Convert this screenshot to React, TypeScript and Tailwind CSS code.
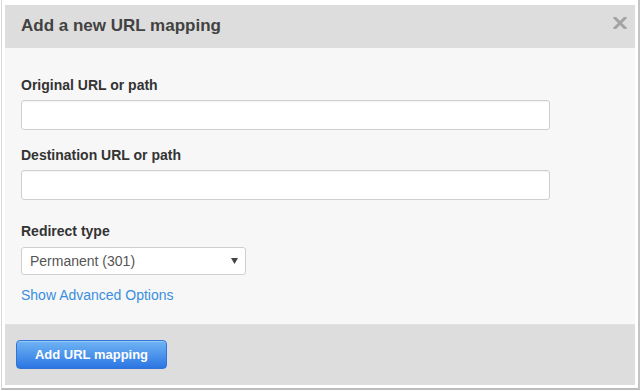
import { useState } from "react";

function CloseIcon() {
  return (
    <svg width="14" height="12" viewBox="0 0 14 12" className="block">
      <path d="M2 1 L12 11 M12 1 L2 11" stroke="#a3a3a3" strokeWidth="3" strokeLinecap="square" />
    </svg>
  );
}

function Field({ label, className = "" }: { label: string; className?: string }) {
  return (
    <div className={className}>
      <label className="block text-[14px] font-bold leading-4 text-[#333]">{label}</label>
      <input
        type="text"
        className="mt-[7px] block h-[30px] w-[529px] rounded-[3px] border border-[#cfcfcf] bg-white px-2 text-[14px] outline-none shadow-[inset_0_1px_1px_rgba(0,0,0,0.05)]"
      />
    </div>
  );
}

export default function App() {
  const [type] = useState("Permanent (301)");

  return (
    <div className="h-[391px] w-[640px] bg-white font-['Liberation_Sans',Arial,sans-serif]">
      <div className="ml-[1px] box-border flex h-[390px] w-[639px] flex-col border-b-2 border-l border-r-2 border-b-[#bdbdbd] border-l-[#d6d6d6] border-r-[#c4c4c4] bg-white pb-[3px] pl-[3px] pr-[3px] pt-[5px]">
        {/* header */}
        <div className="flex h-[43px] shrink-0 items-start justify-between bg-[#dddddd] pl-4 pr-[8px] pt-[11px]">
          <h2 className="text-[17px] font-bold leading-5 text-[#424242]">Add a new URL mapping</h2>
          <button className="mt-[1px]">
            <CloseIcon />
          </button>
        </div>

        {/* body */}
        <div className="flex h-[276px] shrink-0 flex-col bg-[#f7f7f7] pl-4 pt-[29px]">
          <Field label="Original URL or path" />
          <Field label="Destination URL or path" className="mt-[17px]" />

          <div className="mt-[23px]">
            <label className="block text-[14px] font-bold leading-4 text-[#333]">Redirect type</label>
            <div className="relative mt-[8px] flex h-[28px] w-[225px] items-center rounded-[3px] border border-[#cfcfcf] bg-white pl-[8px]">
              <span className="text-[14px] leading-4 text-[#555]">{type}</span>
              <svg width="7" height="6" viewBox="0 0 7 6" className="absolute right-[7px] top-[10px]">
                <path d="M0 0 H7 L3.5 6 Z" fill="#444" />
              </svg>
            </div>
          </div>

          <a href="#" className="mt-[12px] block text-[14px] leading-4 text-[#3a8ee0]">
            Show Advanced Options
          </a>
        </div>

        {/* footer */}
        <div className="flex-1 border-t border-[#e2e2e2] bg-[#dddddd] pl-[11px] pt-[15px]">
          <button className="flex h-[29px] w-[151px] items-center justify-center rounded-[4px] border border-[#2f74d6] bg-gradient-to-b from-[#6fb4f4] to-[#2c75e2] text-[13px] font-bold text-white shadow-[inset_0_1px_0_rgba(255,255,255,0.3)]">
            Add URL mapping
          </button>
        </div>
      </div>
    </div>
  );
}
